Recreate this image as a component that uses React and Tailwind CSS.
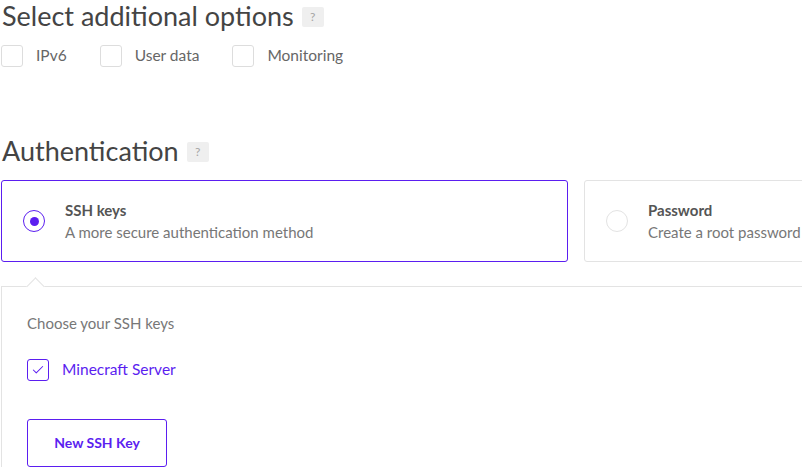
import { Check } from "lucide-react";

const font = { fontFamily: '"Lato", "Liberation Sans", sans-serif' };

const HelpBadge = () => (
  <span className="ml-[8px] mt-[2px] inline-flex h-[20px] w-[22px] items-center justify-center rounded-[2px] bg-[#efefef] text-[12px] text-[#a5a5a5]">
    ?
  </span>
);

const Checkbox = ({ label }) => (
  <label className="flex items-center gap-[13px] text-[15.5px] text-[#666]">
    <span className="h-[22px] w-[22px] rounded-[3px] border border-[#ddd] bg-white" />
    {label}
  </label>
);

const AuthCard = ({ selected, title, subtitle }) => (
  <div
    className={`flex h-[82px] w-[567px] shrink-0 items-center rounded-[3px] border ${
      selected ? "border-[#5b1ef0]" : "border-[#e3e3e3]"
    }`}
  >
    <div className="flex w-[63px] shrink-0 justify-center pl-[1px]">
      {selected ? (
        <span className="flex h-[22px] w-[22px] items-center justify-center rounded-full border border-[#5b1ef0]">
          <span className="h-[9px] w-[9px] rounded-full bg-[#5b1ef0]" />
        </span>
      ) : (
        <span className="h-[22px] w-[22px] rounded-full border border-[#e3e3e3]" />
      )}
    </div>
    <div className="flex flex-col">
      <span className="text-[15px] font-bold leading-[22px] text-[#555]">{title}</span>
      <span className="text-[15px] leading-[22px] text-[#777]">{subtitle}</span>
    </div>
  </div>
);

export default function App() {
  return (
    <div className="h-[467px] w-[802px] overflow-hidden bg-white" style={font}>
      <div className="flex items-center pl-[2px] pt-[1px]">
        <h2 className="text-[27px] leading-[30px] text-[#444]">Select additional options</h2>
        <HelpBadge />
      </div>
      <div className="mt-[13px] flex items-center gap-[33px] pl-[1px]">
        <Checkbox label="IPv6" />
        <Checkbox label="User data" />
        <Checkbox label="Monitoring" />
      </div>

      <div className="mt-[69px] flex items-center pl-[2px]">
        <h2 className="text-[27px] leading-[30px] text-[#444]">Authentication</h2>
        <HelpBadge />
      </div>
      <div className="mt-[14px] flex gap-[16px] pl-[1px]">
        <AuthCard selected title="SSH keys" subtitle="A more secure authentication method" />
        <AuthCard title="Password" subtitle="Create a root password" />
      </div>

      <div className="relative ml-[1px] mt-[24px] h-[200px] border-l border-t border-[#e3e3e3] pl-[25px] pt-[26px]">
        <span className="absolute -top-[7px] left-[27px] h-[13px] w-[13px] rotate-45 border-l border-t border-[#e3e3e3] bg-white" />
        <p className="text-[15px] leading-[20px] text-[#777]">Choose your SSH keys</p>
        <label className="mt-[25px] flex items-center gap-[13px]">
          <span className="flex h-[22px] w-[22px] items-center justify-center rounded-[3px] border border-[#5b1ef0] text-[#5b1ef0]">
            <Check size={14} strokeWidth={1.75} />
          </span>
          <span className="text-[15.5px] text-[#5b1ef0]">Minecraft Server</span>
        </label>
        <button className="mt-[37px] h-[48px] w-[140px] rounded-[3px] border border-[#5b1ef0] text-[14px] font-bold text-[#5b1ef0]">
          New SSH Key
        </button>
      </div>
    </div>
  );
}
